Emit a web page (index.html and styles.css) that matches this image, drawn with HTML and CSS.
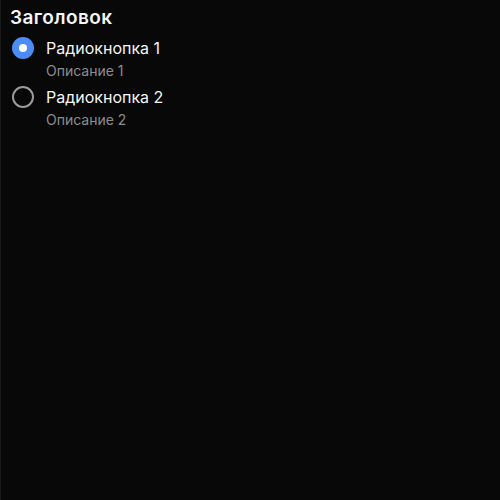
FILE: index.html
```html
<!DOCTYPE html>
<html lang="ru">
<head>
<meta charset="utf-8">
<link rel="stylesheet" href="styles.css">
</head>
<body>
<div class="page">
  <div class="title">Заголовок</div>
  <div class="group">
    <label class="item">
      <span class="radio checked"><span class="dot"></span></span>
      <span class="texts">
        <span class="label">Радиокнопка 1</span>
        <span class="desc">Описание 1</span>
      </span>
    </label>
    <label class="item">
      <span class="radio"></span>
      <span class="texts">
        <span class="label">Радиокнопка 2</span>
        <span class="desc">Описание 2</span>
      </span>
    </label>
  </div>
</div>
</body>
</html>
```
FILE: styles.css
```css
html, body {
  margin: 0;
  padding: 0;
  background: #080808;
  height: 100%;
}
body {
  font-family: Inter, "Noto Sans", sans-serif;
  color: #f5f5f5;
  border-left: 1px solid #1a1a1a;
  box-sizing: border-box;
}
.page {
  padding: 7px 9px;
}
.title {
  font-size: 19px;
  font-weight: 600;
  letter-spacing: 0.4px;
  line-height: 22px;
}
.group {
  display: flex;
  flex-direction: column;
  gap: 5px;
  margin-top: 8px;
}
.item {
  display: flex;
  align-items: flex-start;
  gap: 12px;
}
.radio {
  width: 22px;
  height: 22px;
  border-radius: 50%;
  box-sizing: border-box;
  border: 2px solid #9a9a9a;
  margin-left: 2px;
  display: flex;
  align-items: center;
  justify-content: center;
  flex: none;
}
.radio.checked {
  border: none;
  background: #4b8cf7;
}
.dot {
  width: 8px;
  height: 8px;
  border-radius: 50%;
  background: #fff;
}
.texts {
  display: flex;
  flex-direction: column;
}
.label {
  font-size: 16px;
  line-height: 22px;
}
.desc {
  font-size: 14px;
  line-height: 20px;
  margin-top: 2px;
  color: #8c8c8c;
}
```
